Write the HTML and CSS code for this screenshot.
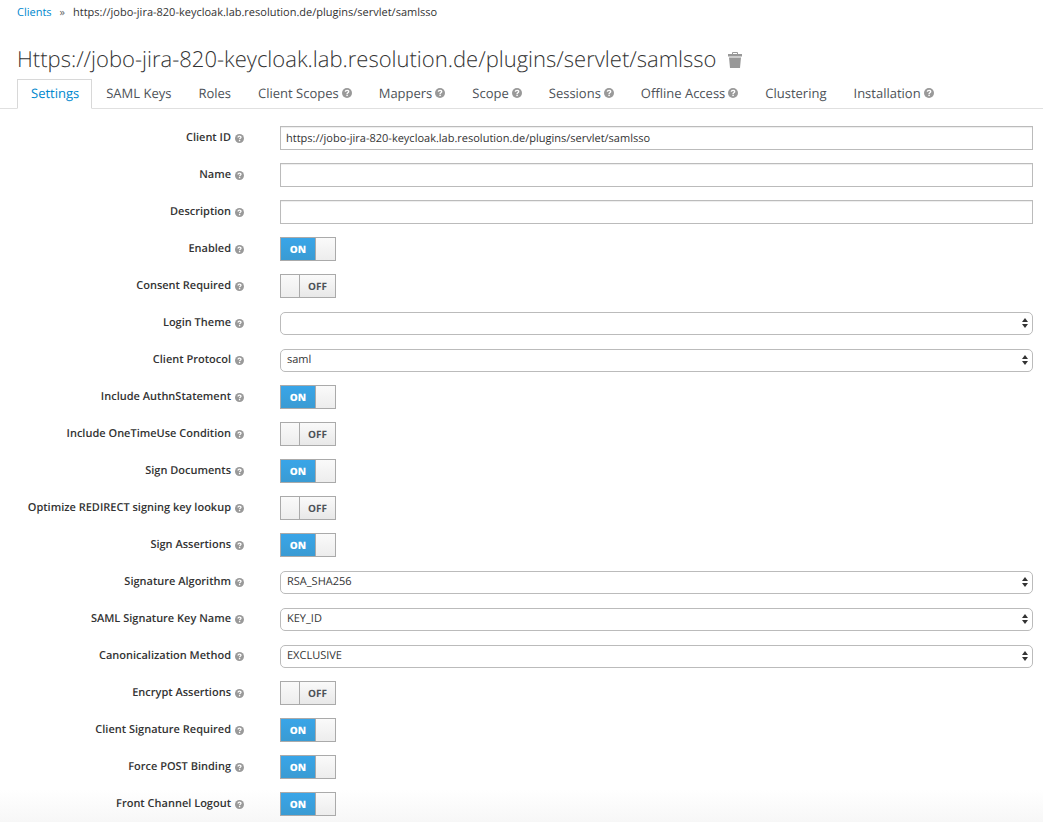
FILE: index.html
```html
<!DOCTYPE html>
<html lang="en">
<head>
<meta charset="utf-8">
<title>Client settings</title>
<link rel="stylesheet" href="styles.css">
</head>
<body>
<svg class="sprite" aria-hidden="true">
  <symbol id="help" viewBox="0 0 12 12">
    <circle cx="6" cy="6" r="6" fill="#999"/>
    <path d="M4 4.6C4.1 2.2 8 2.3 8 4.4C8 5.7 6.1 5.7 6.1 7.1" fill="none" stroke="#fff" stroke-width="1.7"/>
    <rect x="5.2" y="8" width="1.8" height="1.7" fill="#fff"/>
  </symbol>
  <symbol id="updown" viewBox="0 0 6 10">
    <path d="M3 0L6 4H0ZM3 10L0 6H6Z" fill="#333"/>
  </symbol>
</svg>
<nav class="breadcrumb" aria-label="Breadcrumb">
  <a href="#">Clients</a><span class="sep">»</span><span>https://jobo-jira-820-keycloak.lab.resolution.de/plugins/servlet/samlsso</span>
</nav>
<header class="heading">
  <h1>Https://jobo-jira-820-keycloak.lab.resolution.de/plugins/servlet/samlsso</h1>
  <button class="trash" type="button" aria-label="Delete client">
    <svg viewBox="0 0 14 16"><path d="M0 2H4V1Q4 0 5 0H9Q10 0 10 1V2H14V4.5H0ZM5 1V2H9V1ZM1 5.5H13L12 16H2Z" fill="#999" fill-rule="evenodd"/></svg>
  </button>
</header>
<nav class="tabs" aria-label="Client sections">
  <a class="tab active" href="#">Settings</a>
  <a class="tab" href="#">SAML Keys</a>
  <a class="tab" href="#">Roles</a>
  <a class="tab" href="#">Client Scopes<svg class="help"><use href="#help"/></svg></a>
  <a class="tab" href="#">Mappers<svg class="help"><use href="#help"/></svg></a>
  <a class="tab" href="#">Scope<svg class="help"><use href="#help"/></svg></a>
  <a class="tab" href="#">Sessions<svg class="help"><use href="#help"/></svg></a>
  <a class="tab" href="#">Offline Access<svg class="help"><use href="#help"/></svg></a>
  <a class="tab" href="#">Clustering</a>
  <a class="tab" href="#">Installation<svg class="help"><use href="#help"/></svg></a>
</nav>
<form class="form">
  <div class="row"><label for="f1">Client ID<svg class="help"><use href="#help"/></svg></label><input class="text" id="f1" type="text" value="https://jobo-jira-820-keycloak.lab.resolution.de/plugins/servlet/samlsso"></div>
  <div class="row"><label for="f2">Name<svg class="help"><use href="#help"/></svg></label><input class="text" id="f2" type="text"></div>
  <div class="row"><label for="f3">Description<svg class="help"><use href="#help"/></svg></label><input class="text" id="f3" type="text"></div>
  <div class="row"><label for="f4">Enabled<svg class="help"><use href="#help"/></svg></label><div class="switch"><input id="f4" type="checkbox" checked><span class="on">ON</span><span class="knob"></span><span class="off">OFF</span></div></div>
  <div class="row"><label for="f5">Consent Required<svg class="help"><use href="#help"/></svg></label><div class="switch"><input id="f5" type="checkbox"><span class="on">ON</span><span class="knob"></span><span class="off">OFF</span></div></div>
  <div class="row"><label for="f6">Login Theme<svg class="help"><use href="#help"/></svg></label><div class="select"><select id="f6"><option></option></select><svg class="updown"><use href="#updown"/></svg></div></div>
  <div class="row"><label for="f7">Client Protocol<svg class="help"><use href="#help"/></svg></label><div class="select"><select id="f7"><option>saml</option></select><svg class="updown"><use href="#updown"/></svg></div></div>
  <div class="row"><label for="f8">Include AuthnStatement<svg class="help"><use href="#help"/></svg></label><div class="switch"><input id="f8" type="checkbox" checked><span class="on">ON</span><span class="knob"></span><span class="off">OFF</span></div></div>
  <div class="row"><label for="f9">Include OneTimeUse Condition<svg class="help"><use href="#help"/></svg></label><div class="switch"><input id="f9" type="checkbox"><span class="on">ON</span><span class="knob"></span><span class="off">OFF</span></div></div>
  <div class="row"><label for="f10">Sign Documents<svg class="help"><use href="#help"/></svg></label><div class="switch"><input id="f10" type="checkbox" checked><span class="on">ON</span><span class="knob"></span><span class="off">OFF</span></div></div>
  <div class="row"><label for="f11">Optimize REDIRECT signing key lookup<svg class="help"><use href="#help"/></svg></label><div class="switch"><input id="f11" type="checkbox"><span class="on">ON</span><span class="knob"></span><span class="off">OFF</span></div></div>
  <div class="row"><label for="f12">Sign Assertions<svg class="help"><use href="#help"/></svg></label><div class="switch"><input id="f12" type="checkbox" checked><span class="on">ON</span><span class="knob"></span><span class="off">OFF</span></div></div>
  <div class="row"><label for="f13">Signature Algorithm<svg class="help"><use href="#help"/></svg></label><div class="select"><select id="f13"><option>RSA_SHA256</option></select><svg class="updown"><use href="#updown"/></svg></div></div>
  <div class="row"><label for="f14">SAML Signature Key Name<svg class="help"><use href="#help"/></svg></label><div class="select"><select id="f14"><option>KEY_ID</option></select><svg class="updown"><use href="#updown"/></svg></div></div>
  <div class="row"><label for="f15">Canonicalization Method<svg class="help"><use href="#help"/></svg></label><div class="select"><select id="f15"><option>EXCLUSIVE</option></select><svg class="updown"><use href="#updown"/></svg></div></div>
  <div class="row"><label for="f16">Encrypt Assertions<svg class="help"><use href="#help"/></svg></label><div class="switch"><input id="f16" type="checkbox"><span class="on">ON</span><span class="knob"></span><span class="off">OFF</span></div></div>
  <div class="row"><label for="f17">Client Signature Required<svg class="help"><use href="#help"/></svg></label><div class="switch"><input id="f17" type="checkbox" checked><span class="on">ON</span><span class="knob"></span><span class="off">OFF</span></div></div>
  <div class="row"><label for="f18">Force POST Binding<svg class="help"><use href="#help"/></svg></label><div class="switch"><input id="f18" type="checkbox" checked><span class="on">ON</span><span class="knob"></span><span class="off">OFF</span></div></div>
  <div class="row"><label for="f19">Front Channel Logout<svg class="help"><use href="#help"/></svg></label><div class="switch"><input id="f19" type="checkbox" checked><span class="on">ON</span><span class="knob"></span><span class="off">OFF</span></div></div>
</form>
</body>
</html>
```

FILE: styles.css
```css
* { box-sizing: border-box; }
body {
  margin: 0;
  font: 11px/16px "Open Sans", sans-serif;
  text-rendering: geometricPrecision;
  color: #333;
  background: linear-gradient(to top, #f7f7f7, #fff 32px) #fff;
}
a { color: #0088ce; text-decoration: none; }
.sprite { display: none; }
.breadcrumb { display: flex; padding: 5px 17px 0; }
.sep { padding: 0 8px; color: #666; }
.heading { display: flex; align-items: center; gap: 12px; padding: 23px 17px 4px; }
h1 { margin: 0; font-size: 22px; line-height: 31px; font-weight: 300; }
.trash { width: 14px; height: 16px; padding: 0; border: 0; background: none; }
.trash svg { display: block; width: 14px; height: 16px; }
.tabs { display: flex; padding-left: 17px; border-bottom: 1px solid #e0e0e0; }
.tab {
  display: flex;
  align-items: center;
  height: 30px;
  margin-bottom: -1px;
  padding: 0 12px 2px 13px;
  border: 1px solid transparent;
  font-size: 13px;
  color: #4d5258;
  white-space: nowrap;
}
.tab.active { color: #0088ce; background: #fff; border-color: #d8d8d8 #d8d8d8 #fff; }
.help { flex: none; width: 9px; height: 9px; margin-left: 4px; }
.tab .help { width: 10px; height: 10px; margin-left: 3px; }
.form { display: grid; gap: 13px; padding: 17px 10px 6px 17px; }
.row {
  display: grid;
  grid-template-columns: 227px minmax(0, 1fr);
  column-gap: 36px;
  align-items: center;
  min-height: 24px;
}
.row label {
  display: flex;
  align-items: center;
  justify-content: flex-end;
  font-weight: 600;
}
.text, select {
  width: 100%;
  height: 24px;
  border: 1px solid #bbb;
  background: #fff;
  font: inherit;
  text-rendering: inherit;
  color: #333;
}
.text { padding: 0 5px; box-shadow: inset 0 1px 1px #00000013; }
.select { position: relative; }
select { display: block; height: 23px; padding: 0 6px; border-radius: 5px; appearance: none; }
.updown { position: absolute; top: 6px; right: 5px; width: 6px; height: 10px; pointer-events: none; }
.switch {
  position: relative;
  display: flex;
  width: 56px;
  height: 24px;
  border: 1px solid #aaa;
  font-size: 10px;
  line-height: 22px;
  text-align: center;
}
.switch input { position: absolute; inset: 0; width: 100%; height: 100%; margin: 0; opacity: 0; }
.on { display: none; flex: 1; font-weight: 800; color: #fff; background: linear-gradient(#39a5e8, #3a9bd3); }
.off { flex: 1; font-weight: 700; color: #4d5258; background: linear-gradient(#fafafa, #e8e8e8); }
.knob { width: 19px; border-right: 1px solid #aaa; background: linear-gradient(#fafafa, #ededed); }
.switch input:checked ~ .on { display: block; }
.switch input:checked ~ .off { display: none; }
.switch input:checked ~ .knob { width: 20px; border-right: 0; border-left: 1px solid #aaa; }
```
